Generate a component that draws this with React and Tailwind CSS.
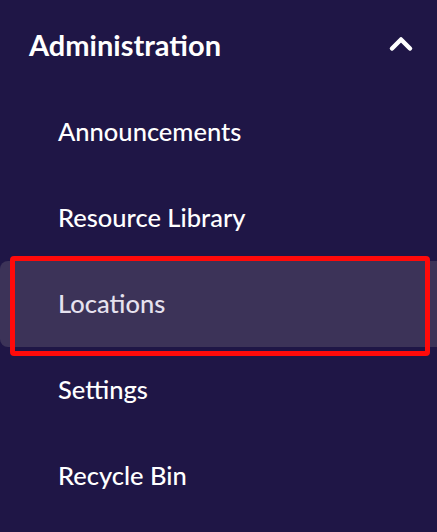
import { ChevronUp } from 'lucide-react';

const items = ['Announcements', 'Resource Library', 'Locations', 'Settings', 'Recycle Bin'];

export default function App() {
    const active = 'Locations';

    return (
        <div className="relative w-[437px] h-[532px] overflow-hidden bg-[#1f1646] text-white font-['Lato',sans-serif]">
            {/* section header */}
            <div className="flex items-center justify-between h-[89px] pl-[29px] pr-[18px]">
                <span className="text-[29px] font-bold leading-none">Administration</span>
                <ChevronUp className="w-[36px] h-[36px] -mt-[2px]" strokeWidth={3} />
            </div>

            <div className="flex flex-col">
                {items.map((item) => (
                    <div
                        key={item}
                        className={
                            item === active
                                ? 'flex items-center h-[86px] pl-[58px] rounded-l-lg bg-[#3c3358] text-[#e6e2ef]'
                                : 'flex items-center h-[86px] pl-[58px]'
                        }
                    >
                        <span className="text-[25.5px] font-medium leading-none">{item}</span>
                    </div>
                ))}
            </div>

            {/* highlight marker */}
            <div className="absolute left-[10px] top-[256px] w-[420px] h-[100px] border-[5px] border-[#ff0a0a] rounded-[4px] pointer-events-none" />
        </div>
    );
}
